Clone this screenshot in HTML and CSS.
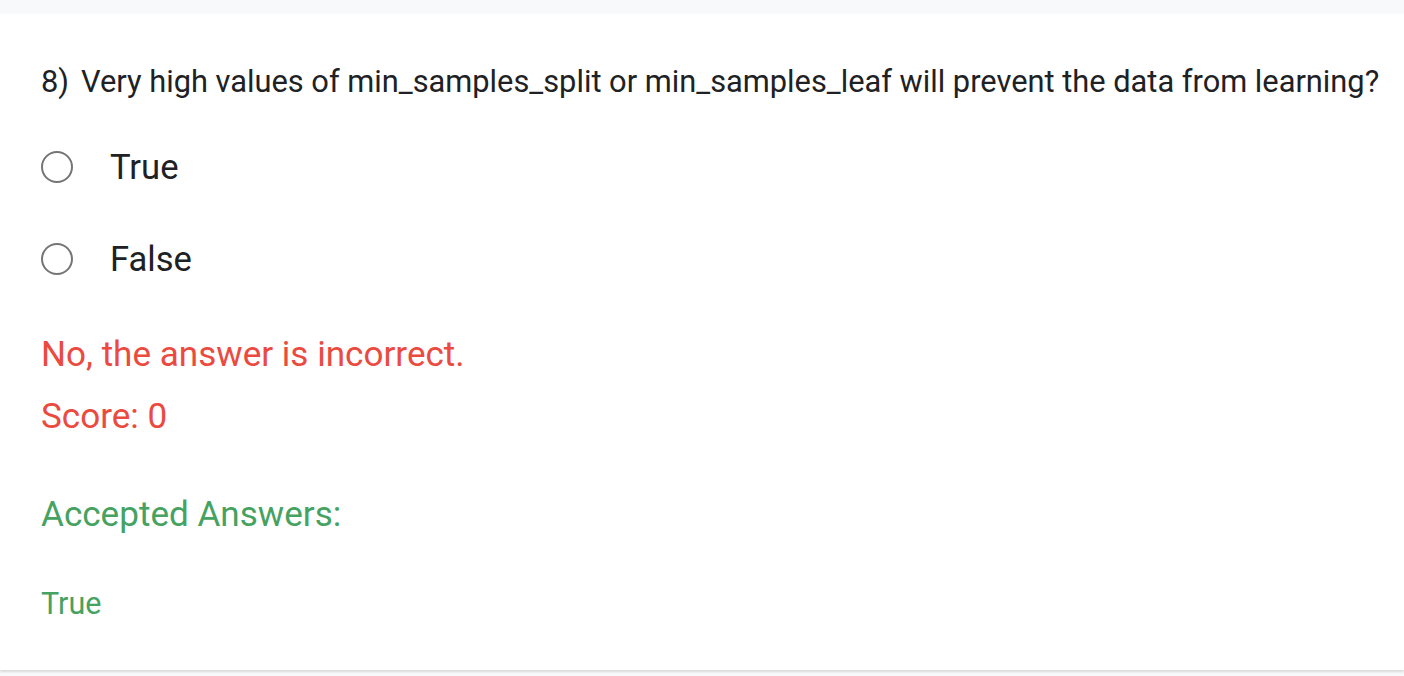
FILE: index.html
```html
<!DOCTYPE html>
<html>
<head>
<meta charset="utf-8">
<link rel="stylesheet" href="styles.css">
</head>
<body>
<div class="card">
  <div class="question"><span class="qnum">8)</span><span>Very high values of min_samples_split or min_samples_leaf will prevent the data from learning?</span></div>
  <div class="options">
    <label class="option"><span class="radio"></span><span class="opt-text">True</span></label>
    <label class="option"><span class="radio"></span><span class="opt-text">False</span></label>
  </div>
  <div class="feedback">
    <div class="wrong">No, the answer is incorrect.</div>
    <div class="score">Score: 0</div>
  </div>
  <div class="accepted">
    <div class="acc-title">Accepted Answers:</div>
    <div class="acc-value">True</div>
  </div>
</div>
</body>
</html>
```

FILE: styles.css
```css
html, body {
  margin: 0;
  padding: 0;
}
body {
  background: #f8f9fa;
  font-family: Roboto, "Liberation Sans", sans-serif;
  color: #202124;
  padding-top: 14px;
  height: 676px;
  box-sizing: border-box;
}
.card {
  background: #ffffff;
  height: 656px;
  box-sizing: border-box;
  padding: 0 0 0 41px;
  box-shadow: 0 2px 2px rgba(0,0,0,0.12);
  display: flex;
  flex-direction: column;
}
.question {
  font-size: 30.8px;
  line-height: 36px;
  margin-top: 50px;
  white-space: nowrap;
  display: flex;
}
.qnum {
  margin-right: 12px;
}
.options {
  display: flex;
  flex-direction: column;
  gap: 56px;
  margin-top: 49px;
}
.option {
  display: flex;
  align-items: center;
  height: 36px;
  font-size: 34.6px;
}
.radio {
  width: 28px;
  height: 28px;
  border: 2px solid #757575;
  border-radius: 50%;
  margin-right: 37px;
}
.feedback {
  color: #eb4a3e;
  font-size: 35.1px;
  margin-top: 59px;
}
.wrong {
  line-height: 36px;
}
.score {
  line-height: 36px;
  margin-top: 26px;
}
.accepted {
  color: #45a261;
  margin-top: 62px;
}
.acc-title {
  font-size: 35.1px;
  line-height: 36px;
}
.acc-value {
  font-size: 30.5px;
  line-height: 32px;
  margin-top: 56px;
}
```
